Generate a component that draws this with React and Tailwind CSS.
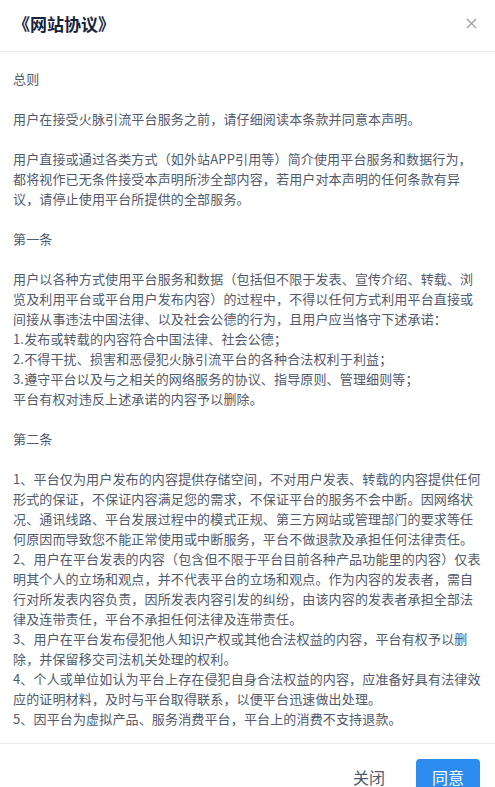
import { X } from "lucide-react";

const sections = [
  ["总则"],
  ["用户在接受火脉引流平台服务之前，请仔细阅读本条款并同意本声明。"],
  [
    "用户直接或通过各类方式（如外站APP引用等）简介使用平台服务和数据行为，",
    "都将视作已无条件接受本声明所涉全部内容，若用户对本声明的任何条款有异",
    "议，请停止使用平台所提供的全部服务。",
  ],
  ["第一条"],
  [
    "用户以各种方式使用平台服务和数据（包括但不限于发表、宣传介绍、转载、浏",
    "览及利用平台或平台用户发布内容）的过程中，不得以任何方式利用平台直接或",
    "间接从事违法中国法律、以及社会公德的行为，且用户应当恪守下述承诺：",
    "1.发布或转载的内容符合中国法律、社会公德；",
    "2.不得干扰、损害和恶侵犯火脉引流平台的各种合法权利于利益；",
    "3.遵守平台以及与之相关的网络服务的协议、指导原则、管理细则等；",
    "平台有权对违反上述承诺的内容予以删除。",
  ],
  ["第二条"],
  [
    "1、平台仅为用户发布的内容提供存储空间，不对用户发表、转载的内容提供任何",
    "形式的保证，不保证内容满足您的需求，不保证平台的服务不会中断。因网络状",
    "况、通讯线路、平台发展过程中的模式正规、第三方网站或管理部门的要求等任",
    "何原因而导致您不能正常使用或中断服务，平台不做退款及承担任何法律责任。",
    "2、用户在平台发表的内容（包含但不限于平台目前各种产品功能里的内容）仅表",
    "明其个人的立场和观点，并不代表平台的立场和观点。作为内容的发表者，需自",
    "行对所发表内容负责，因所发表内容引发的纠纷，由该内容的发表者承担全部法",
    "律及连带责任，平台不承担任何法律及连带责任。",
    "3、用户在平台发布侵犯他人知识产权或其他合法权益的内容，平台有权予以删",
    "除，并保留移交司法机关处理的权利。",
    "4、个人或单位如认为平台上存在侵犯自身合法权益的内容，应准备好具有法律效",
    "应的证明材料，及时与平台取得联系，以便平台迅速做出处理。",
    "5、因平台为虚拟产品、服务消费平台，平台上的消费不支持退款。",
  ],
];

export default function App() {
  return (
    <div
      className="w-full bg-white flex flex-col"
      style={{ fontFamily: '"Noto Sans CJK SC", "Noto Sans", sans-serif' }}
    >
      {/* Header */}
      <div className="h-[52px] flex items-center justify-between pl-[13px] pr-[15px] pb-[4px] border-b border-[#e8eaec]">
        <h1 className="text-[17px] font-bold leading-[20px] text-[#17233d]">《网站协议》</h1>
        <X className="w-[17px] h-[17px] text-[#999]" strokeWidth={1.5} />
      </div>

      {/* Body */}
      <div className="pl-[13px] pr-[10px] pt-[17px] pb-[14px] text-[13px] leading-[20px] tracking-[0.15px] text-[#515a6e]">
        {sections.map((lines, i) => (
          <p key={i} className={i === 0 ? "" : "mt-5"}>
            {lines.map((line) => (
              <span key={line} className="block whitespace-nowrap">
                {line}
              </span>
            ))}
          </p>
        ))}
      </div>

      {/* Footer */}
      <div className="border-t border-[#e8eaec] pt-[15px] pb-[12px] pr-[15px] flex items-center justify-end gap-[31px]">
        <button className="text-[16px] leading-[20px] text-[#515a6e]">关闭</button>
        <button className="h-[36px] px-[16px] rounded-[4px] bg-[#2d8cf0] text-white text-[16px]">同意</button>
      </div>
    </div>
  );
}
